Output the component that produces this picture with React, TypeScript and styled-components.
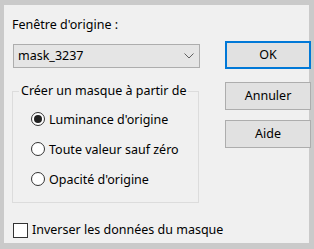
import React from "react";
import styled, { createGlobalStyle } from "styled-components";

const Global = createGlobalStyle`
  html, body { margin: 0; padding: 0; }
  body {
    background: #cacaca;
    width: 314px;
    height: 249px;
    overflow: hidden;
    font-family: "Noto Sans", "Open Sans", sans-serif;
    font-size: 12.5px;
    color: #000;
  }
`;

const Panel = styled.div`
  box-sizing: border-box;
  margin: 5px 0 0 4px;
  width: 305px;
  height: 238px;
  background: #f0f0f0;
  display: flex;
  flex-direction: row;
`;

const LeftCol = styled.div`
  display: flex;
  flex-direction: column;
  padding: 12px 0 0 8px;
  width: 188px;
  flex-shrink: 0;
`;

const RightCol = styled.div`
  display: flex;
  flex-direction: column;
  gap: 10px;
  padding: 36px 0 0 25px;
`;

const Caption = styled.div`
  line-height: 16px;
  height: 16px;
  white-space: nowrap;
`;

const Combo = styled.div`
  box-sizing: border-box;
  margin: 11px 0 0 1px;
  width: 187px;
  height: 24px;
  background: #e5e5e5;
  border: 1px solid #adadad;
  display: flex;
  align-items: center;
  justify-content: space-between;
  padding: 0 5px 0 4px;
  line-height: 16px;
`;

const Group = styled.fieldset`
  box-sizing: border-box;
  margin: 15px 0 0 0;
  width: 187px;
  height: 120px;
  border: 1px solid #dcdcdc;
  padding: 12px 0 0 6px;
  display: flex;
  flex-direction: column;
  gap: 14px;
`;

const Legend = styled.legend`
  padding: 0 2px;
  line-height: 16px;
  white-space: nowrap;
`;

const RadioRow = styled.div`
  display: flex;
  align-items: center;
  height: 16px;
  padding-left: 12px;
  white-space: nowrap;
`;

const RadioCircle = styled.span<{ $on?: boolean }>`
  box-sizing: border-box;
  flex-shrink: 0;
  width: 14px;
  height: 14px;
  border: 1px solid #333;
  border-radius: 50%;
  background: #fff;
  display: inline-flex;
  align-items: center;
  justify-content: center;
  margin-right: 4px;
  &::after {
    content: "";
    display: ${(p) => (p.$on ? "block" : "none")};
    width: 8px;
    height: 8px;
    border-radius: 50%;
    background: #222;
  }
`;

const CheckRow = styled.div`
  display: flex;
  align-items: center;
  margin: 19px 0 0 1px;
  white-space: nowrap;
  line-height: 16px;
`;

const CheckBox = styled.span`
  box-sizing: border-box;
  flex-shrink: 0;
  width: 15px;
  height: 15px;
  border: 1px solid #333;
  background: #fff;
  margin-right: 4px;
`;

const Button = styled.div<{ $default?: boolean }>`
  box-sizing: border-box;
  width: 86px;
  height: 28px;
  background: #e1e1e1;
  border: ${(p) => (p.$default ? "2px solid #0078d7" : "1px solid #adadad")};
  margin-bottom: ${(p) => (p.$default ? "3px" : "0")};
  display: flex;
  align-items: center;
  justify-content: center;
  line-height: 16px;
`;

export default function App() {
  return (
    <>
      <Global />
      <Panel>
        <LeftCol>
          <Caption>Fenêtre d'origine :</Caption>
          <Combo>
            <span>mask_3237</span>
            <svg width="10" height="6" viewBox="0 0 10 6">
              <path d="M0.5 0.5 L5 5 L9.5 0.5" fill="none" stroke="#606060" strokeWidth="1" />
            </svg>
          </Combo>
          <Group>
            <Legend>Créer un masque à partir de</Legend>
            <RadioRow>
              <RadioCircle $on />
              Luminance d'origine
            </RadioRow>
            <RadioRow>
              <RadioCircle />
              Toute valeur sauf zéro
            </RadioRow>
            <RadioRow>
              <RadioCircle />
              Opacité d'origine
            </RadioRow>
          </Group>
          <CheckRow>
            <CheckBox />
            Inverser les données du masque
          </CheckRow>
        </LeftCol>
        <RightCol>
          <Button $default>OK</Button>
          <Button>Annuler</Button>
          <Button>Aide</Button>
        </RightCol>
      </Panel>
    </>
  );
}
